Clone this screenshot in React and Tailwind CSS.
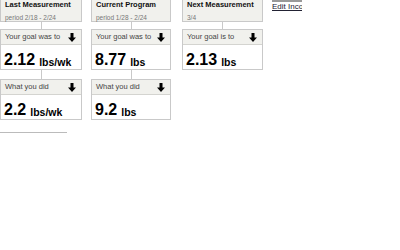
export default function App() {
  const cols = [
    { title: "Last Measurement", sub: "period 2/18 - 2/24", goalLabel: "Your goal was to", goal: "2.12", goalUnit: "lbs/wk", did: "2.2", didUnit: "lbs/wk" },
    { title: "Current Program", sub: "period 1/28 - 2/24", goalLabel: "Your goal was to", goal: "8.77", goalUnit: "lbs", did: "9.2", didUnit: "lbs" },
    { title: "Next Measurement", sub: "3/4", goalLabel: "Your goal is to", goal: "2.13", goalUnit: "lbs" },
  ];
  const Arrow = () => (
    <svg width="8" height="9" viewBox="0 0 8 9" className="block">
      <path d="M2.5 0 H5.5 V4.5 H8 L4 9 L0 4.5 H2.5 Z" fill="#000" />
    </svg>
  );
  const Box = ({ label, value, unit }) => (
    <div className="border border-[#c9c9c9] bg-white">
      <div className="flex items-center justify-between h-[15px] pl-[4px] pr-[5px] bg-[#f1f1ed] border-b border-[#d4d4d0]">
        <span className="text-[7.5px] text-[#444] whitespace-nowrap">{label}</span>
        <Arrow />
      </div>
      <div className="h-[24px] flex items-end pb-[1px] px-[3px] leading-none">
        <span className="text-[16px] font-bold text-black">{value}</span>
        <span className="text-[10.5px] font-bold text-black ml-[4px] mb-[1px]">{unit}</span>
      </div>
    </div>
  );
  const Line = ({ h }) => (
    <div className="flex justify-center">
      <div className={`w-px bg-[#c9c9c9] ${h === 6 ? "h-[7px]" : "h-[9px]"}`} />
    </div>
  );
  return (
    <div className="w-[400px] h-[250px] bg-white overflow-hidden relative" style={{ fontFamily: '"Liberation Sans", Arial, sans-serif' }}>
      <div className="flex items-start -mt-[2px]">
        {cols.map((c, i) => (
          <div key={i} className={`${i === 0 ? "w-[82px]" : i === 1 ? "w-[80px] ml-[9px]" : "w-[81px] ml-[11px]"}`}>
            <div className="h-[24px] border border-[#c9c9c9] bg-[#f1f1ed] px-[4px] pt-[2px] leading-none">
              <div className="text-[7.5px] font-bold text-[#111] whitespace-nowrap">{c.title}</div>
              <div className="text-[6.5px] text-[#777] mt-[6px] whitespace-nowrap">{c.sub}</div>
            </div>
            <Line h={6} />
            <Box label={c.goalLabel} value={c.goal} unit={c.goalUnit} />
            {c.did && (
              <>
                <Line h={10} />
                <Box label="What you did" value={c.did} unit={c.didUnit} />
              </>
            )}
          </div>
        ))}
        <div className="ml-[9px] mt-[2px] w-[30px] overflow-hidden">
          <div className="w-[30px] h-[2px] bg-[#999]" />
          <div className="text-[8px] text-[#223] underline leading-none mt-[1px] whitespace-nowrap">Edit Income</div>
        </div>
      </div>
      <div className="w-[67px] h-px bg-[#bbb] mt-[12px]" />
    </div>
  );
}
